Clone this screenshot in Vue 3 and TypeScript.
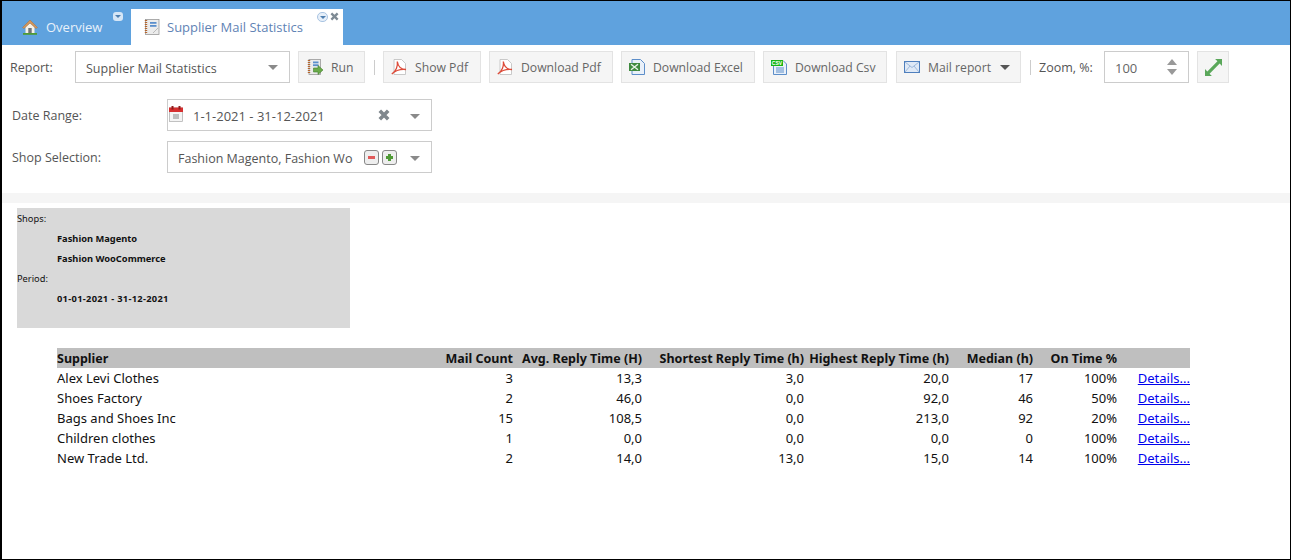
<script setup lang="ts">
interface Row {
  supplier: string
  count: number
  avg: string
  shortest: string
  highest: string
  median: number
  onTime: string
}

const rows: Row[] = [
  { supplier: 'Alex Levi Clothes', count: 3, avg: '13,3', shortest: '3,0', highest: '20,0', median: 17, onTime: '100%' },
  { supplier: 'Shoes Factory', count: 2, avg: '46,0', shortest: '0,0', highest: '92,0', median: 46, onTime: '50%' },
  { supplier: 'Bags and Shoes Inc', count: 15, avg: '108,5', shortest: '0,0', highest: '213,0', median: 92, onTime: '20%' },
  { supplier: 'Children clothes', count: 1, avg: '0,0', shortest: '0,0', highest: '0,0', median: 0, onTime: '100%' },
  { supplier: 'New Trade Ltd.', count: 2, avg: '14,0', shortest: '13,0', highest: '15,0', median: 14, onTime: '100%' },
]
</script>

<template>
  <div class="app">
    <header class="tabs">
      <div class="tab overview">
        <svg class="icon" viewBox="0 0 16 16">
          <path d="M3.500 8 8 4l4.500 4v6.500h-9Z" fill="#f6f2e8" />
          <path d="M.500 8.500 8 1l7.500 7.500-1.500 1L8 4 2 9.500Z" fill="#d2965c" stroke="#a8703a" stroke-width=".5" />
          <rect x="6.300" y="9" width="3.400" height="5.500" fill="#6f7276" />
          <rect x="1" y="14" width="14" height="1.800" fill="#4f9a35" />
        </svg>
        <span>Overview</span>
        <span class="tab-menu"><i></i></span>
      </div>
      <div class="tab active">
        <svg class="icon" viewBox="0 0 16 16">
          <rect x="1.500" y=".500" width="13.500" height="15" fill="#ececec" stroke="#9a9a9a" stroke-width=".8" />
          <path d="M2 1v14" stroke="#b5652d" stroke-width="2.400" stroke-dasharray="1 1" />
          <rect x="6" y="3" width="6.500" height="1.800" fill="#5b8fcc" />
          <rect x="6" y="6" width="6.500" height="1.800" fill="#5b8fcc" />
          <path d="M9 14l5-5" stroke="#bbb" />
        </svg>
        <span>Supplier Mail Statistics</span>
        <span class="tab-menu light"><i></i></span>
        <svg class="tab-close" viewBox="0 0 10 10">
          <path d="M1.500 1.500l7 7m0-7-7 7" stroke="#7e8a94" stroke-width="2.600" />
        </svg>
      </div>
    </header>

    <div class="toolbar">
      <label class="report-label">Report:</label>
      <div class="select report-select">
        <span>Supplier Mail Statistics</span>
        <i class="caret"></i>
      </div>
      <button class="btn run">
        <svg class="icon" viewBox="0 0 16 16">
          <rect x="2" y=".500" width="11.500" height="15" fill="#ececec" stroke="#9a9a9a" stroke-width=".8" />
          <path d="M2 1v14" stroke="#b5652d" stroke-width="2.400" stroke-dasharray="1 1" />
          <rect x="6" y="2.500" width="5.500" height="1.800" fill="#5b8fcc" />
          <rect x="6" y="5.300" width="5.500" height="1.800" fill="#5b8fcc" />
          <path d="M6.500 9H11V6.500L16 11l-5 4.500V13H6.500Z" fill="#6bab4a" stroke="#40802c" stroke-width=".6" />
        </svg>
        Run
      </button>
      <span class="divider first"></span>
      <button class="btn show-pdf">
        <svg class="icon" viewBox="0 0 16 16">
          <path d="M3 .500h7.500l4 4V15.500H3Z" fill="#fff" stroke="#bdbdbd" stroke-width=".8" />
          <path d="M.800 15C5 12.500 7 7 6.300 2.500 7 7 10 10.500 15 10.500 10 10 5 11 .800 15Z" fill="none" stroke="#dd4b39" stroke-width="1.300" />
        </svg>
        Show Pdf
      </button>
      <button class="btn download-pdf">
        <svg class="icon" viewBox="0 0 16 16">
          <path d="M3 .500h7.500l4 4V15.500H3Z" fill="#fff" stroke="#bdbdbd" stroke-width=".8" />
          <path d="M.800 15C5 12.500 7 7 6.300 2.500 7 7 10 10.500 15 10.500 10 10 5 11 .800 15Z" fill="none" stroke="#dd4b39" stroke-width="1.300" />
        </svg>
        Download Pdf
      </button>
      <button class="btn download-excel">
        <svg class="icon" viewBox="0 0 16 16">
          <path d="M3 .500h8.500l4 4V15.500H3Z" fill="#e9f0f9" stroke="#5d8ec9" />
          <rect x="0" y="4" width="11" height="8" fill="#3f8a3f" />
          <path d="M2 5.300l7 5.400m0-5.400-7 5.400" stroke="#e8f3e8" stroke-width="1.400" />
        </svg>
        Download Excel
      </button>
      <button class="btn download-csv">
        <svg class="icon" viewBox="0 0 16 16">
          <path d="M2.500 1.500h9.500l3.500 3.500v10.500h-13Z" fill="#e9f0f9" stroke="#5d8ec9" />
          <path d="M5 9h8M5 11h8M5 13h8" stroke="#5d8ec9" />
          <rect x="0" y="1" width="12" height="6" fill="#16b516" />
          <text x="6" y="6" class="csv-label">CSV</text>
        </svg>
        Download Csv
      </button>
      <button class="btn mail-report">
        <svg class="icon mail" viewBox="0 0 16 12">
          <rect x=".500" y=".500" width="15" height="11" fill="#dfe9f6" stroke="#4f7fbd" />
          <path d="M1 1l7 5.500L15 1M1 11l5-6M15 11l-5-6" fill="none" stroke="#9db9dc" />
        </svg>
        Mail report
        <i class="caret dark"></i>
      </button>
      <span class="divider second"></span>
      <label class="zoom-label">Zoom, %:</label>
      <div class="zoom-input">
        <span>100</span>
        <div class="spinner"><i class="up"></i><i class="down"></i></div>
      </div>
      <button class="btn expand">
        <svg viewBox="0 0 16 16" width="17" height="17">
          <path d="M9.500 0H16v6.500L13.800 4.300 4.300 13.800 6.500 16H0V9.500l2.200 2.200L11.700 2.200Z" fill="#5aa75a" />
        </svg>
      </button>
    </div>

    <div class="filters">
      <div class="filter">
        <label>Date Range:</label>
        <div class="select date-select">
          <svg class="calendar" viewBox="0 0 14 16">
            <rect x=".500" y="2" width="13" height="13.500" fill="#f4f4f4" stroke="#aaa" stroke-width=".7" />
            <rect x="0" y="1.500" width="14" height="4.500" fill="#d62f2f" />
            <rect x="2.500" y="0" width="2" height="3.500" fill="#8f1c1c" />
            <rect x="9.500" y="0" width="2" height="3.500" fill="#8f1c1c" />
            <rect x="4" y="8" width="6" height="5" fill="#bdbdbd" />
          </svg>
          <span class="date-text">1-1-2021 - 31-12-2021</span>
          <svg class="clear" viewBox="0 0 12 12">
            <path d="M1.800 1.800l8.400 8.400m0-8.400-8.400 8.400" stroke="#7f878d" stroke-width="3.600" />
          </svg>
          <i class="caret"></i>
        </div>
      </div>
      <div class="filter">
        <label>Shop Selection:</label>
        <div class="select shop-select">
          <span class="shop-text">Fashion Magento, Fashion Wo</span>
          <span class="mini minus"><i></i></span>
          <span class="mini plus"><i></i><b></b></span>
          <i class="caret"></i>
        </div>
      </div>
    </div>

    <div class="strip"></div>

    <main class="report">
      <section class="summary">
        <div class="summary-title">Shops:</div>
        <div class="summary-value">Fashion Magento</div>
        <div class="summary-value">Fashion WooCommerce</div>
        <div class="summary-title">Period:</div>
        <div class="summary-value period">01-01-2021 - 31-12-2021</div>
      </section>

      <table class="stats">
        <colgroup>
          <col style="width: 388px" />
          <col style="width: 68px" />
          <col style="width: 129px" />
          <col style="width: 162px" />
          <col style="width: 145px" />
          <col style="width: 84px" />
          <col style="width: 84px" />
          <col style="width: 73px" />
        </colgroup>
        <thead>
          <tr>
            <th class="left">Supplier</th>
            <th>Mail Count</th>
            <th>Avg. Reply Time (H)</th>
            <th>Shortest Reply Time (h)</th>
            <th>Highest Reply Time (h)</th>
            <th>Median (h)</th>
            <th>On Time %</th>
            <th></th>
          </tr>
        </thead>
        <tbody>
          <tr v-for="row in rows" :key="row.supplier">
            <td class="left">{{ row.supplier }}</td>
            <td>{{ row.count }}</td>
            <td>{{ row.avg }}</td>
            <td>{{ row.shortest }}</td>
            <td>{{ row.highest }}</td>
            <td>{{ row.median }}</td>
            <td>{{ row.onTime }}</td>
            <td><a href="#" @click.prevent>Details...</a></td>
          </tr>
        </tbody>
      </table>
    </main>
  </div>
</template>

<style scoped>
.app {
  width: 1291px;
  height: 560px;
  box-sizing: border-box;
  border: 1px solid #000;
  border-left-width: 2px;
  background: #fff;
  font-family: "Open Sans", "Noto Sans", sans-serif;
  font-size: 12.5px;
  color: #555;
  overflow: hidden;
}

.tabs {
  display: flex;
  align-items: flex-end;
  height: 44px;
  background: #5fa2de;
}

.tab {
  position: relative;
  display: flex;
  align-items: center;
  height: 36px;
  box-sizing: border-box;
  font-size: 13px;
}

.tab.overview {
  width: 129px;
  padding-left: 20px;
  color: #e8f1fa;
}

.tab.active {
  width: 212px;
  padding-left: 13px;
  background: #fff;
  color: #5f83b5;
}

.icon {
  width: 16px;
  height: 16px;
  flex: none;
  margin-right: 8px;
}

.tab.active .icon {
  margin-right: 7px;
}

.csv-label {
  font-family: "Liberation Sans", sans-serif;
  font-size: 5px;
  font-weight: 700;
  fill: #fff;
  text-anchor: middle;
}

.tab-menu {
  position: absolute;
  top: 3px;
  right: 8px;
  width: 10px;
  height: 9px;
  background: #d6e6f6;
  border-radius: 3px;
  display: flex;
  align-items: center;
  justify-content: center;
}

.tab-menu i {
  width: 0;
  height: 0;
  border-left: 3px solid transparent;
  border-right: 3px solid transparent;
  border-top: 3px solid #4f7fb0;
}

.tab-menu.light {
  top: 3px;
  right: 15px;
  background: #e6eff9;
  border: 1px solid #a9c4e2;
  box-sizing: content-box;
  width: 9px;
  height: 8px;
  border-radius: 5px;
}

.tab-close {
  position: absolute;
  top: 3px;
  right: 4px;
  width: 9px;
  height: 9px;
}

.toolbar {
  display: flex;
  align-items: center;
  height: 32px;
  margin-top: 6px;
  padding-left: 8px;
}

.report-label {
  width: 65px;
}

.select {
  display: flex;
  align-items: center;
  box-sizing: border-box;
  height: 32px;
  border: 1px solid #ccc;
  background: #fff;
  position: relative;
}

.report-select {
  width: 215px;
  padding-left: 10px;
  justify-content: space-between;
  padding-right: 11px;
}

.report-select span,
.date-text,
.shop-text,
.zoom-input span {
  padding-top: 2px;
}

.caret {
  width: 0;
  height: 0;
  border-left: 5px solid transparent;
  border-right: 5px solid transparent;
  border-top: 5px solid #8a8a8a;
}

.caret.dark {
  border-top-color: #555;
  margin-left: 9px;
}

.btn {
  display: flex;
  align-items: center;
  box-sizing: border-box;
  height: 32px;
  padding: 0 0 0 7px;
  border: 1px solid #e3e3e3;
  background: #f5f5f5;
  font: inherit;
  font-size: 12.2px;
  color: #666;
  white-space: nowrap;
}

.run {
  width: 67px;
  margin-left: 8px;
  padding-left: 8px;
}

.show-pdf {
  width: 98px;
}

.download-pdf {
  width: 124px;
  margin-left: 8px;
}

.download-excel {
  width: 134px;
  margin-left: 8px;
}

.download-csv {
  width: 124px;
  margin-left: 8px;
}

.mail-report {
  width: 125px;
  margin-left: 9px;
}

.icon.mail {
  height: 12px;
}

.divider {
  width: 1px;
  height: 15px;
  background: #ccc;
}

.divider.first {
  margin: 0 8px 0 9px;
}

.divider.second {
  margin: 0 8px 0 9px;
}

.zoom-label {
  width: 65px;
}

.zoom-input {
  display: flex;
  align-items: center;
  justify-content: space-between;
  box-sizing: border-box;
  width: 85px;
  height: 32px;
  padding: 0 11px 0 10px;
  border: 1px solid #ccc;
  color: #666;
  font-size: 13px;
}

.spinner {
  display: flex;
  flex-direction: column;
  gap: 4px;
}

.spinner i {
  width: 0;
  height: 0;
  border-left: 5px solid transparent;
  border-right: 5px solid transparent;
}

.spinner .up {
  border-bottom: 6px solid #999;
}

.spinner .down {
  border-top: 6px solid #999;
}

.expand {
  width: 32px;
  margin-left: 8px;
  padding: 0;
  justify-content: center;
}

.filters {
  display: flex;
  flex-direction: column;
  gap: 10px;
  margin-top: 16px;
  padding-left: 10px;
}

.filter {
  display: flex;
  align-items: center;
}

.filter label {
  width: 155px;
}

.date-select,
.shop-select {
  width: 265px;
}

.date-select {
  padding-left: 1px;
  font-size: 13px;
}

.calendar {
  width: 14px;
  height: 16px;
  margin-bottom: 3px;
}

.date-text {
  margin-left: 10px;
  width: 185px;
}

.clear {
  width: 12px;
  height: 12px;
}

.date-select .caret,
.shop-select .caret {
  position: absolute;
  right: 11px;
  top: 14px;
}

.shop-select {
  padding-left: 10px;
}

.shop-text {
  width: 186px;
  white-space: nowrap;
  overflow: hidden;
}

.mini {
  position: relative;
  width: 15px;
  height: 15px;
  box-sizing: border-box;
  border: 1px solid #888;
  border-radius: 3px;
  background: #eee;
  margin-right: 3px;
  display: block;
}

.mini i {
  position: absolute;
  left: 3px;
  top: 5px;
  width: 7px;
  height: 3px;
  background: #e05a5a;
}

.mini.plus i {
  background: #4f9a35;
}

.mini.plus b {
  position: absolute;
  left: 5px;
  top: 3px;
  width: 3px;
  height: 7px;
  background: #4f9a35;
}

.strip {
  height: 10px;
  margin-top: 20px;
  background: #f5f5f5;
}

.report {
  padding: 5px 0 0 15px;
  font-family: "Noto Sans", "Open Sans", sans-serif;
  color: #111;
}

.summary {
  width: 333px;
  height: 120px;
  box-sizing: border-box;
  background: #d9d9d9;
  font-size: 9.3px;
}

.summary-title,
.summary-value {
  height: 20px;
  line-height: 21px;
}

.summary-value {
  padding-left: 40px;
  font-weight: 700;
}

.summary-value.period {
  letter-spacing: 0.3px;
}

.stats {
  width: 1133px;
  margin: 20px 0 0 40px;
  table-layout: fixed;
  border-collapse: collapse;
  font-size: 13px;
}

.stats th,
.stats td {
  height: 20px;
  padding: 0;
  text-align: right;
  white-space: nowrap;
}

.stats th {
  background: #bfbfbf;
  font-size: 12.5px;
  font-weight: 700;
}

.stats .left {
  text-align: left;
}

.stats a {
  color: #0000ee;
}
</style>

<style>
html,
body {
  margin: 0;
  background: #fff;
}
</style>
